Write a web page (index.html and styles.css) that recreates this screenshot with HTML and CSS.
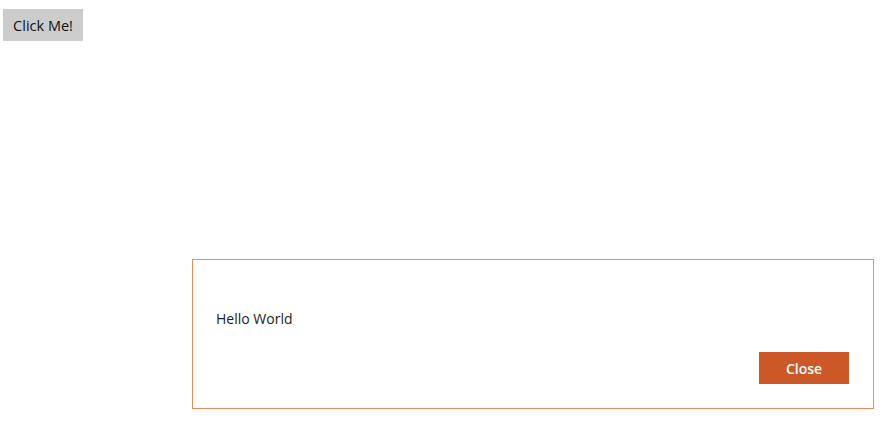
FILE: index.html
```html
<!DOCTYPE html>
<html lang="en">
<head>
<meta charset="UTF-8">
<title>Dialog</title>
<link rel="stylesheet" href="styles.css">
</head>
<body>
    <button class="open-button" id="openButton">Click Me!</button>

    <div class="dialog" id="dialog">
        <div class="dialog-text">Hello World</div>
        <div class="dialog-actions">
            <button class="close-button" id="closeButton">Close</button>
        </div>
    </div>
</body>
</html>
```

FILE: styles.css
```css
body {
    margin: 0;
    padding: 0;
    background-color: #fff;
    font-family: "Open Sans", "Noto Sans", sans-serif;
}

.open-button {
    display: block;
    margin: 9px 0 0 3px;
    width: 80px;
    height: 32px;
    padding: 0;
    border: none;
    background-color: #cccccc;
    color: #111;
    font-family: inherit;
    font-size: 14.5px;
}

/* окно поверх страницы */
.dialog {
    position: absolute;
    left: 192px;
    top: 259px;
    width: 682px;
    height: 150px;
    box-sizing: border-box;
    border: 1px solid #ea8b5e;
    background-color: #fff;
    padding: 49px 24px 24px 23px;
    display: flex;
    flex-direction: column;
}

.dialog-text {
    font-size: 14px;
    line-height: 20px;
    color: #222;
}

.dialog-actions {
    margin-top: auto;
    display: flex;
    justify-content: flex-end;
}

.close-button {
    width: 90px;
    height: 32px;
    padding: 0;
    border: none;
    background-color: #cc5827;
    color: #fff;
    font-family: inherit;
    font-size: 14px;
    font-weight: 600;
}
```
